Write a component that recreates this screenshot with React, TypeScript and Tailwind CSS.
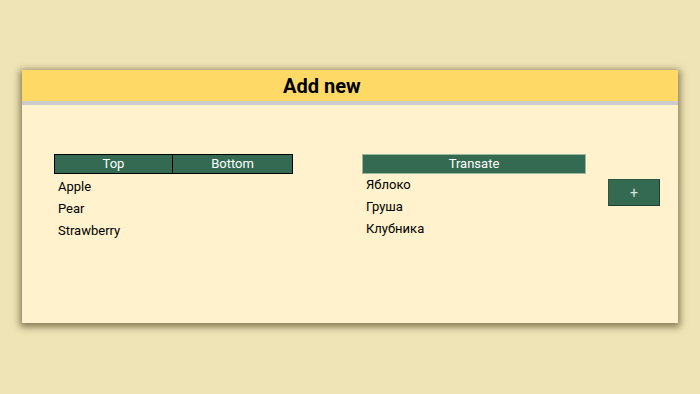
const fruits = [
  { top: "Apple", ru: "Яблоко" },
  { top: "Pear", ru: "Груша" },
  { top: "Strawberry", ru: "Клубника" },
];

export default function App() {
  return (
    <div
      className="w-[700px] h-[394px] bg-[#efe4b5] pt-[70px] pl-[22px]"
      style={{ fontFamily: "Roboto, 'Noto Sans', sans-serif" }}
    >
      <div className="w-[656px] h-[253px] bg-[#fff2cc] shadow-[0_2px_7px_2px_rgba(60,50,20,0.6)] flex flex-col">
        <div className="h-[31px] bg-[#ffd966] flex items-center pl-[261px]">
          <h1 className="text-[20px] font-bold text-black leading-none">Add new</h1>
        </div>
        <div className="h-[4px] bg-[#cccccc]" />

        <div className="flex pt-[49px]">
          <div className="ml-[32px] w-[239px]">
            <div className="flex h-[20px] border border-black bg-[#356a52] text-white text-[13px]">
              <div className="w-[118px] border-r border-black flex items-center justify-center">Top</div>
              <div className="flex-1 flex items-center justify-center">Bottom</div>
            </div>
            <ul className="text-[13px] text-black pl-[4px] mt-[2px]">
              {fruits.map((f) => (
                <li key={f.top} className="h-[22px] flex items-center">{f.top}</li>
              ))}
            </ul>
          </div>

          <div className="ml-[69px] w-[224px]">
            <div className="h-[20px] border border-[#9cb79a] bg-[#356a52] text-white text-[13px] flex items-center justify-center">
              Transate
            </div>
            <ul className="text-[13px] text-black pl-[4px]">
              {fruits.map((f) => (
                <li key={f.ru} className="h-[22px] flex items-center">{f.ru}</li>
              ))}
            </ul>
          </div>

          <div className="ml-[22px] pt-[25px]">
            <button className="w-[52px] h-[27px] bg-[#356a52] border border-[#2c5640] border-b-[#1f3f2e] border-r-[#1f3f2e] text-[#d9e6dc] text-[14px] flex items-center justify-center leading-none">
              +
            </button>
          </div>
        </div>
      </div>
    </div>
  );
}
